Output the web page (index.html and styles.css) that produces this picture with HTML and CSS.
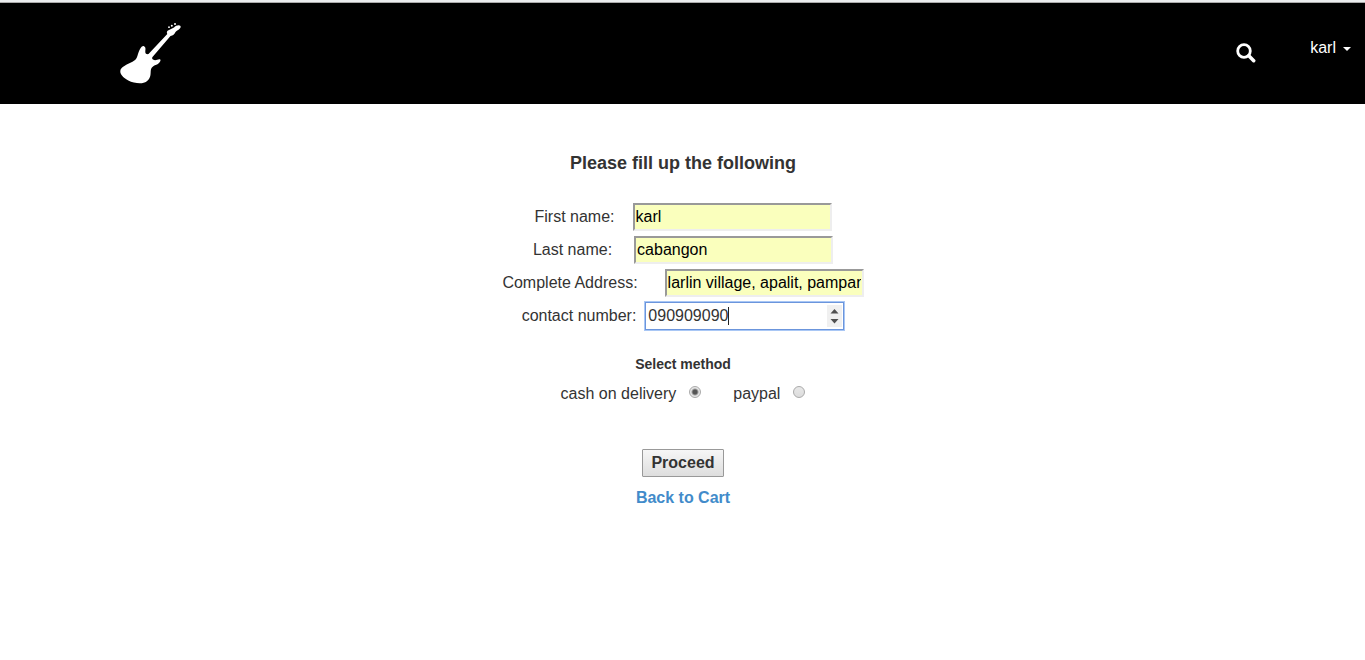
FILE: index.html
```html
<!DOCTYPE html>
<html lang="en">
<head>
<meta charset="utf-8">
<title>Checkout</title>
<link rel="stylesheet" href="styles.css">
</head>
<body>
<header class="navbar">
  <a class="brand" href="#" aria-label="Home">
    <svg width="62" height="62" viewBox="0 0 62 62" fill="#fff" aria-hidden="true">
      <path d="M60.500 3C59.500 1.500 56 2 54 4.500L49 7C46.500 8 46.500 9.500 47.300 11L28.500 31C26.500 31.500 25 30.500 25.300 28.500C25.500 26.500 26 24 24 23.200C21.500 22.500 20 26 18.500 29.500C17 34 17 36.500 12.500 38.700C7 41.500 .500 44 .300 48C0 52 4 55 8.300 57.500C14 60.500 23 61.500 26.500 58.500C31 55 30.500 51.500 30.700 48.500C31 44 33 43 37 41.500C39.500 40.500 41.500 37 40 36.300C38 35.700 36 38 33.500 36.800C32 36 31.800 35 32.500 34L50.500 13C53 12.700 54.500 11 55.500 9C57.500 7 61.500 5.500 60.500 3Z"/>
      <circle cx="49" cy="4.200" r=".9"/><circle cx="51.800" cy="2.700" r="1"/><circle cx="55" cy="1.100" r="1"/>
    </svg>
  </a>
  <div class="nav-actions">
    <button class="search" type="button" aria-label="Search">
      <svg width="20" height="20" viewBox="0 0 20 20" fill="none" stroke="#fff" aria-hidden="true">
        <circle cx="8" cy="8" r="6.300" stroke-width="2.800"/>
        <path d="M12.800 12.800L17.700 17.700" stroke-width="3.500" stroke-linecap="round"/>
      </svg>
    </button>
    <button class="account" type="button">karl<span class="arrow"></span></button>
  </div>
</header>
<main>
  <form class="checkout">
    <h1 class="title">Please fill up the following</h1>
    <div class="fields">
      <div class="row gap-m"><label for="first">First name:</label><input class="field filled" id="first" type="text" value="karl"></div>
      <div class="row gap-l"><label for="last">Last name:</label><input class="field filled" id="last" type="text" value="cabangon"></div>
      <div class="row gap-xl"><label for="address">Complete Address:</label><input class="field filled" id="address" type="text" value="larlin village, apalit, pampanga"></div>
      <div class="row gap-s"><label for="contact">contact number:</label>
        <div class="number">
          <input class="field active" id="contact" type="number" value="090909090">
          <span class="caret"></span>
          <svg class="spinner" width="15" height="22" viewBox="0 0 15 22" aria-hidden="true"><path fill="#f0f0f0" d="M0 0h15v22H0z"/><path fill="#505050" d="M3.500 8.500L7.500 4L11.500 8.500ZM3.500 14L7.500 18.500L11.500 14Z"/></svg>
        </div>
      </div>
    </div>
    <h2 class="subtitle" id="method">Select method</h2>
    <div class="methods" role="radiogroup" aria-labelledby="method">
      <label class="method">cash on delivery<input class="radio" type="radio" name="method" checked></label>
      <label class="method">paypal<input class="radio" type="radio" name="method"></label>
    </div>
    <button class="proceed" type="button">Proceed</button>
    <a class="back" href="#">Back to Cart</a>
  </form>
</main>
</body>
</html>
```
FILE: styles.css
```css
* { box-sizing: border-box; }
body {
  margin: 0;
  background: #fff;
  color: #333;
  font: 16px/22px "Liberation Sans", Arial, sans-serif;
  border-top: 2px solid #ebedee;
}
.navbar {
  display: flex;
  justify-content: space-between;
  align-items: flex-start;
  padding: 20px 14px 19px 120px;
  background: #000;
  border-top: 1px solid #aaa;
}
.brand, .brand svg, .search svg { display: block; }
.nav-actions { display: flex; align-items: flex-start; gap: 54px; padding-top: 14px; }
.search, .account { padding: 0; border: 0; background: none; color: #fff; font: inherit; }
.search { margin-top: 6px; }
.account { display: flex; align-items: center; gap: 7px; }
.arrow { margin-top: 2px; border: 4px solid transparent; border-top-color: #fff; border-bottom: 0; }
.checkout { display: flex; flex-direction: column; align-items: center; padding: 48px 0 0 1px; }
.title { margin: 0 0 29px; font-size: 18px; line-height: 22px; }
.fields { display: flex; flex-direction: column; gap: 5px; }
.row { display: flex; justify-content: center; align-items: center; }
.gap-s { gap: 9px; }
.gap-m { gap: 18px; }
.gap-l { gap: 22px; }
.gap-xl { gap: 27px; }
.field {
  display: block;
  width: 199px;
  height: 28px;
  padding: 0 1px;
  border: 2px solid;
  border-color: #999 #eee #eee #999;
  border-radius: 0;
  color: #333;
  background: #fff;
  font: inherit;
}
.filled { background: #faffbd; color: #000; }
.number { position: relative; }
.active {
  padding: 0 2px;
  border: 1px solid #6b95dc;
  box-shadow: 0 0 0 1px #a9c7f5;
  outline: 0;
  appearance: textfield;
}
.active::-webkit-inner-spin-button { display: none; }
.caret { position: absolute; left: 83px; top: 5px; width: 1px; height: 18px; background: #222; }
.spinner { position: absolute; right: 2px; top: 3px; }
.subtitle { margin: 23px 0 8px; font-size: 14px; line-height: 22px; }
.methods { display: flex; gap: 32px; }
.method { display: flex; align-items: center; gap: 13px; }
.radio {
  appearance: none;
  width: 12px;
  height: 12px;
  margin: 0 0 4px;
  border: 1px solid #aaa;
  border-radius: 50%;
  background: linear-gradient(#e8e8e8, #dcdcdc);
}
.radio:checked { background: radial-gradient(circle, #555 0 2px, #e6e6e6 4px); }
.proceed {
  height: 28px;
  margin: 44px 0 10px;
  padding: 0 8px;
  border: 1px solid #999;
  border-radius: 1px;
  background: linear-gradient(#f6f6f6, #dedede);
  color: #333;
  font: bold 16px/22px "Liberation Sans", Arial, sans-serif;
}
.back { color: #428bca; font-weight: bold; text-decoration: none; }
```
